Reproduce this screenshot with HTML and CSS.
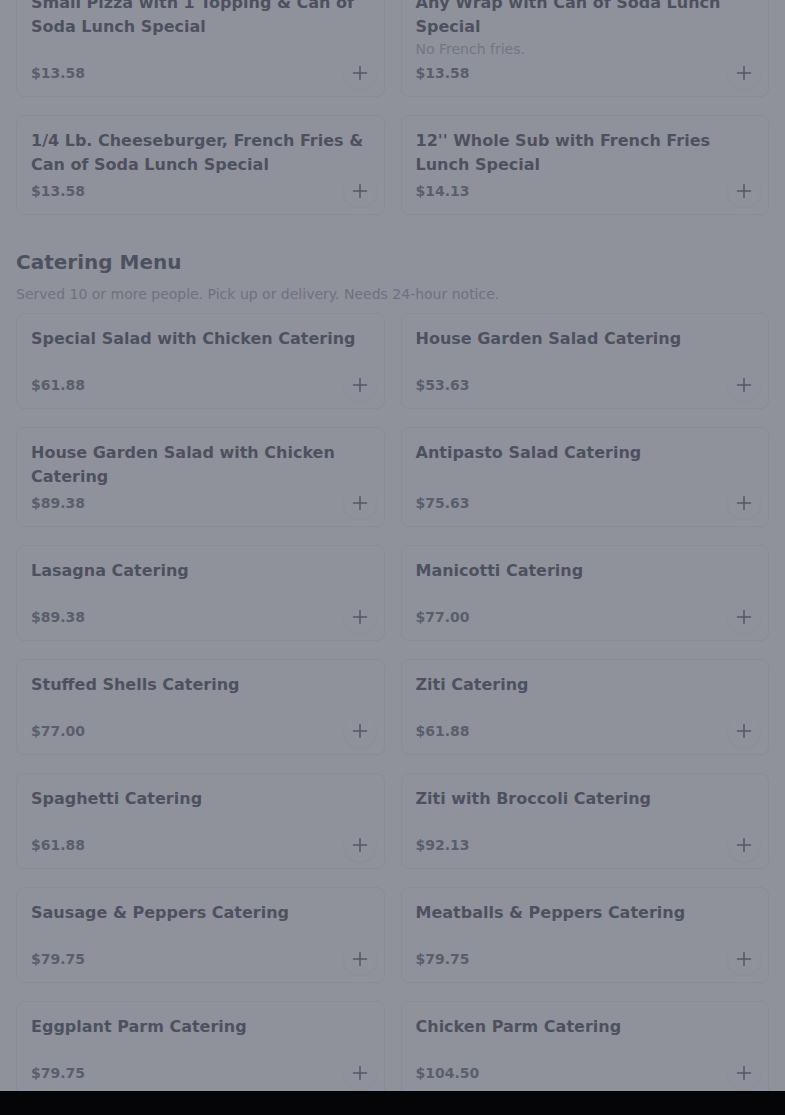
FILE: index.html
```html
<!DOCTYPE html>
<html lang="en">
<head>
<meta charset="utf-8">
<title>Menu</title>
<link rel="stylesheet" href="styles.css">
</head>
<body>
<main class="page">
  <section class="section section-lunch">
    <div class="grid">
      <div class="card">
        <div class="card-title">Small Pizza with 1 Topping &amp; Can of Soda Lunch Special</div>
        <div class="card-foot"><span class="price">$13.58</span><button class="add" aria-label="Add"><svg viewBox="0 0 16 16" width="16" height="16"><path d="M8 1.5v13M1.5 8h13"/></svg></button></div>
      </div>
      <div class="card">
        <div class="card-title">Any Wrap with Can of Soda Lunch Special</div>
        <div class="card-desc">No French fries.</div>
        <div class="card-foot"><span class="price">$13.58</span><button class="add" aria-label="Add"><svg viewBox="0 0 16 16" width="16" height="16"><path d="M8 1.5v13M1.5 8h13"/></svg></button></div>
      </div>
      <div class="card">
        <div class="card-title">1/4 Lb. Cheeseburger, French Fries &amp; Can of Soda Lunch Special</div>
        <div class="card-foot"><span class="price">$13.58</span><button class="add" aria-label="Add"><svg viewBox="0 0 16 16" width="16" height="16"><path d="M8 1.5v13M1.5 8h13"/></svg></button></div>
      </div>
      <div class="card">
        <div class="card-title">12'' Whole Sub with French Fries Lunch Special</div>
        <div class="card-foot"><span class="price">$14.13</span><button class="add" aria-label="Add"><svg viewBox="0 0 16 16" width="16" height="16"><path d="M8 1.5v13M1.5 8h13"/></svg></button></div>
      </div>
    </div>
  </section>

  <section class="section">
    <h2 class="section-title">Catering Menu</h2>
    <p class="section-sub">Served 10 or more people. Pick up or delivery. Needs 24-hour notice.</p>
    <div class="grid">
      <div class="card">
        <div class="card-title">Special Salad with Chicken Catering</div>
        <div class="card-foot"><span class="price">$61.88</span><button class="add" aria-label="Add"><svg viewBox="0 0 16 16" width="16" height="16"><path d="M8 1.5v13M1.5 8h13"/></svg></button></div>
      </div>
      <div class="card">
        <div class="card-title">House Garden Salad Catering</div>
        <div class="card-foot"><span class="price">$53.63</span><button class="add" aria-label="Add"><svg viewBox="0 0 16 16" width="16" height="16"><path d="M8 1.5v13M1.5 8h13"/></svg></button></div>
      </div>
      <div class="card">
        <div class="card-title">House Garden Salad with Chicken Catering</div>
        <div class="card-foot"><span class="price">$89.38</span><button class="add" aria-label="Add"><svg viewBox="0 0 16 16" width="16" height="16"><path d="M8 1.5v13M1.5 8h13"/></svg></button></div>
      </div>
      <div class="card">
        <div class="card-title">Antipasto Salad Catering</div>
        <div class="card-foot"><span class="price">$75.63</span><button class="add" aria-label="Add"><svg viewBox="0 0 16 16" width="16" height="16"><path d="M8 1.5v13M1.5 8h13"/></svg></button></div>
      </div>
      <div class="card">
        <div class="card-title">Lasagna Catering</div>
        <div class="card-foot"><span class="price">$89.38</span><button class="add" aria-label="Add"><svg viewBox="0 0 16 16" width="16" height="16"><path d="M8 1.5v13M1.5 8h13"/></svg></button></div>
      </div>
      <div class="card">
        <div class="card-title">Manicotti Catering</div>
        <div class="card-foot"><span class="price">$77.00</span><button class="add" aria-label="Add"><svg viewBox="0 0 16 16" width="16" height="16"><path d="M8 1.5v13M1.5 8h13"/></svg></button></div>
      </div>
      <div class="card">
        <div class="card-title">Stuffed Shells Catering</div>
        <div class="card-foot"><span class="price">$77.00</span><button class="add" aria-label="Add"><svg viewBox="0 0 16 16" width="16" height="16"><path d="M8 1.5v13M1.5 8h13"/></svg></button></div>
      </div>
      <div class="card">
        <div class="card-title">Ziti Catering</div>
        <div class="card-foot"><span class="price">$61.88</span><button class="add" aria-label="Add"><svg viewBox="0 0 16 16" width="16" height="16"><path d="M8 1.5v13M1.5 8h13"/></svg></button></div>
      </div>
      <div class="card">
        <div class="card-title">Spaghetti Catering</div>
        <div class="card-foot"><span class="price">$61.88</span><button class="add" aria-label="Add"><svg viewBox="0 0 16 16" width="16" height="16"><path d="M8 1.5v13M1.5 8h13"/></svg></button></div>
      </div>
      <div class="card">
        <div class="card-title">Ziti with Broccoli Catering</div>
        <div class="card-foot"><span class="price">$92.13</span><button class="add" aria-label="Add"><svg viewBox="0 0 16 16" width="16" height="16"><path d="M8 1.5v13M1.5 8h13"/></svg></button></div>
      </div>
      <div class="card">
        <div class="card-title">Sausage &amp; Peppers Catering</div>
        <div class="card-foot"><span class="price">$79.75</span><button class="add" aria-label="Add"><svg viewBox="0 0 16 16" width="16" height="16"><path d="M8 1.5v13M1.5 8h13"/></svg></button></div>
      </div>
      <div class="card">
        <div class="card-title">Meatballs &amp; Peppers Catering</div>
        <div class="card-foot"><span class="price">$79.75</span><button class="add" aria-label="Add"><svg viewBox="0 0 16 16" width="16" height="16"><path d="M8 1.5v13M1.5 8h13"/></svg></button></div>
      </div>
      <div class="card">
        <div class="card-title">Eggplant Parm Catering</div>
        <div class="card-foot"><span class="price">$79.75</span><button class="add" aria-label="Add"><svg viewBox="0 0 16 16" width="16" height="16"><path d="M8 1.5v13M1.5 8h13"/></svg></button></div>
      </div>
      <div class="card">
        <div class="card-title">Chicken Parm Catering</div>
        <div class="card-foot"><span class="price">$104.50</span><button class="add" aria-label="Add"><svg viewBox="0 0 16 16" width="16" height="16"><path d="M8 1.5v13M1.5 8h13"/></svg></button></div>
      </div>
    </div>
  </section>
</main>
<div class="overlay"></div>
<div class="bottom-bar"></div>
</body>
</html>
```

FILE: styles.css
```css
html, body {
  margin: 0;
  padding: 0;
  overflow: hidden;
  height: 100%;
}
body {
  background: #ffffff;
  font-family: "DejaVu Sans", "Noto Sans", sans-serif;
  color: #1f2937;
}
.page {
  padding: 0 16px;
  margin-top: -23px;
}
.grid {
  display: grid;
  grid-template-columns: 1fr 1fr;
  column-gap: 16px;
  row-gap: 18px;
}
.section-title {
  margin: 33px 0 0;
  font-size: 20px;
  line-height: 28px;
  font-weight: 700;
  color: #1f2937;
}
.section-sub {
  margin: 8px 0 9px;
  font-size: 14px;
  line-height: 20px;
  color: #8f96a3;
}
.card {
  box-sizing: border-box;
  min-height: 96px;
  display: flex;
  flex-direction: column;
  padding: 13px 14px 13px;
  border: 1px solid #eaecef;
  border-radius: 8px;
  background: #ffffff;
  box-shadow: 0 1px 2px rgba(0, 0, 0, 0.03);
}
.card-title {
  font-size: 16px;
  line-height: 24px;
  font-weight: 700;
  color: #1f2937;
}
.card-desc {
  font-size: 14px;
  line-height: 20px;
  color: #9ca3af;
}
.card-foot {
  margin-top: auto;
  padding-top: 4px;
  display: flex;
  align-items: center;
  justify-content: space-between;
  height: 20px;
}
.price {
  font-size: 14px;
  line-height: 20px;
  font-weight: 700;
  color: #4b5563;
}
.add {
  width: 32px;
  height: 32px;
  margin: -6px -6px -6px 0;
  padding: 0;
  border: none;
  border-radius: 50%;
  background: #ffffff;
  box-shadow: 0 1px 4px rgba(0, 0, 0, 0.09);
  display: flex;
  align-items: center;
  justify-content: center;
}
.add svg path {
  fill: none;
  stroke: #374151;
  stroke-width: 1.5;
  stroke-linecap: round;
}
.overlay {
  position: fixed;
  inset: 0;
  background: rgba(95, 99, 112, 0.7);
  z-index: 10;
}
.bottom-bar {
  position: fixed;
  left: 0;
  right: 0;
  bottom: 0;
  height: 24px;
  background: #050508;
  z-index: 20;
}
```
